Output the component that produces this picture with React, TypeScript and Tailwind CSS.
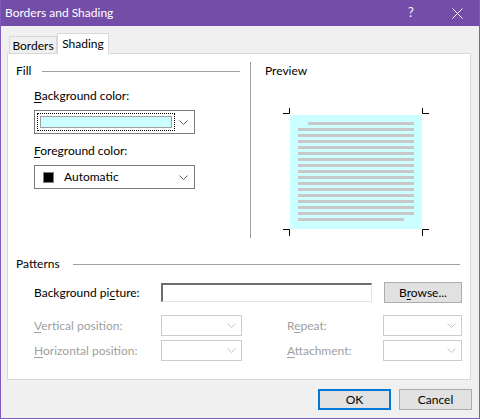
import React from 'react';

const font = { fontFamily: 'Lato, "Noto Sans", "Liberation Sans", sans-serif' };

function Chevron({ disabled }: { disabled?: boolean }) {
  return (
    <svg width="9" height="5" viewBox="0 0 9 5" className="shrink-0">
      <polyline
        points="0.5,0.5 4.5,4.5 8.5,0.5"
        fill="none"
        stroke={disabled ? '#c4c4c4' : '#606060'}
        strokeWidth="1"
      />
    </svg>
  );
}

function Accel({ children }: { children: React.ReactNode }) {
  return <span className="underline underline-offset-2 decoration-1">{children}</span>;
}

function DisabledSelect({ width }: { width: string }) {
  return (
    <div className={`${width} h-[21px] border border-[#cccccc] bg-white flex items-center justify-end pr-[5px]`}>
      <Chevron disabled />
    </div>
  );
}

function PreviewArt() {
  const lines = Array.from({ length: 17 }, (_, i) => i);
  return (
    <svg width="146" height="128" viewBox="0 0 146 128">
      <rect x="7" y="7" width="132" height="114" fill="#ccffff" />
      {lines.map((i) => (
        <rect
          key={i}
          x={i === 0 ? 25 : 15}
          y={14 + i * 6}
          width={i === 0 ? 106 : i === 16 ? 106 : 116}
          height="3"
          fill="#c8c8c8"
        />
      ))}
      <path d="M0 5.5 H6.5 V0" fill="none" stroke="#000" />
      <path d="M139.5 0 V5.5 H146" fill="none" stroke="#000" />
      <path d="M0 121.5 H6.5 V128" fill="none" stroke="#000" />
      <path d="M139.5 128 V121.5 H146" fill="none" stroke="#000" />
    </svg>
  );
}

export default function App() {
  return (
    <div
      className="w-[480px] h-[419px] bg-[#f0f0f0] border-x border-b border-[#7d5bbf] flex flex-col text-[12px] text-black overflow-hidden"
      style={font}
    >
      {/* Title bar */}
      <div className="h-[26px] shrink-0 bg-[#744da9] flex items-center text-white -mx-px">
        <span className="pl-[5px] text-[12px] flex-1">Borders and Shading</span>
        <span className="w-[46px] text-center text-[13px]">?</span>
        <span className="w-[46px] flex justify-center">
          <svg width="11" height="11" viewBox="0 0 11 11">
            <path d="M0.5 0.5 L10.5 10.5 M10.5 0.5 L0.5 10.5" stroke="#fff" strokeWidth="1" />
          </svg>
        </span>
      </div>

      <div className="flex-1 flex flex-col pl-[6px] pr-[8px] pt-[7px]">
        {/* Tabs */}
        <div className="h-[20px] flex items-end pl-[2px] relative z-10">
          <div className="w-[48px] h-[17px] border border-b-0 border-[#d9d9d9] bg-[#f0f0f0] flex items-center justify-center pt-[1px]">
            Borders
          </div>
          <div className="w-[52px] h-[21px] -mb-px border border-b-0 border-[#d9d9d9] bg-white flex items-center justify-center pb-[1px]">
            Shading
          </div>
        </div>

        {/* Panel */}
        <div className="h-[327px] border border-[#d9d9d9] bg-white flex flex-col">
          <div className="mt-[8px] h-[176px] flex">
            {/* Fill */}
            <div className="w-[242px] pl-[8px] flex flex-col">
              <div className="h-[18px] flex items-center">
                <span>Fill</span>
                <div className="flex-1 h-px bg-[#a0a0a0] ml-[11px] mr-[10px]" />
              </div>
              <div className="pl-[18px] flex flex-col">
                <div className="h-[16px] mt-[8px] flex items-center">
                  <span><Accel>B</Accel>ackground color:</span>
                </div>
                <div className="mt-[6px] w-[161px] h-[24px] border border-[#7a7a7a] flex items-center pl-[2px] pr-[6px]">
                  <div className="w-[138px] h-[18px] border border-dotted border-black p-[2px]">
                    <div className="w-full h-full bg-[#ccffff] border border-[#a0a0a0]" />
                  </div>
                  <div className="flex-1 flex justify-end">
                    <Chevron />
                  </div>
                </div>
                <div className="h-[16px] mt-[9px] flex items-center">
                  <span><Accel>F</Accel>oreground color:</span>
                </div>
                <div className="mt-[6px] w-[161px] h-[24px] border border-[#7a7a7a] flex items-center pl-[8px] pr-[6px]">
                  <div className="w-[11px] h-[11px] bg-black border border-[#808080]" />
                  <span className="ml-[10px] flex-1">Automatic</span>
                  <Chevron />
                </div>
              </div>
            </div>

            <div className="w-px bg-[#a0a0a0]" />

            {/* Preview */}
            <div className="flex-1 flex flex-col">
              <div className="h-[18px] flex items-center pl-[14px]">Preview</div>
              <div className="mt-[28px] ml-[32px]">
                <PreviewArt />
              </div>
            </div>
          </div>

          {/* Patterns */}
          <div className="mt-[17px] h-[18px] flex items-center pl-[8px] pr-[10px]">
            <span>Patterns</span>
            <div className="flex-1 h-px bg-[#a0a0a0] ml-[13px]" />
          </div>
          <div className="mt-[9px] h-[21px] flex items-center pl-[26px]">
            <span className="w-[127px]">Background pi<Accel>c</Accel>ture:</span>
            <div className="w-[211px] h-[19px] border-t-2 border-l-2 border-r border-b border-t-[#6d6d6d] border-l-[#6d6d6d] border-r-[#e3e3e3] border-b-[#e3e3e3] bg-white" />
            <button className="ml-[12px] w-[78px] h-[21px] bg-[#e1e1e1] border border-[#adadad] flex items-center justify-center">
              <span>B<Accel>r</Accel>owse...</span>
            </button>
          </div>
          <div className="mt-[12px] h-[21px] flex items-center pl-[26px] text-[#a0a0a0]">
            <span className="w-[127px]"><Accel>V</Accel>ertical position:</span>
            <DisabledSelect width="w-[81px]" />
            <span className="ml-[45px] w-[96px]">R<Accel>e</Accel>peat:</span>
            <DisabledSelect width="w-[79px]" />
          </div>
          <div className="mt-[4px] h-[21px] flex items-center pl-[26px] text-[#a0a0a0]">
            <span className="w-[127px]"><Accel>H</Accel>orizontal position:</span>
            <DisabledSelect width="w-[81px]" />
            <span className="ml-[45px] w-[96px]"><Accel>A</Accel>ttachment:</span>
            <DisabledSelect width="w-[79px]" />
          </div>
        </div>

        {/* Buttons */}
        <div className="mt-[9px] flex justify-end gap-[8px] -mr-px">
          <button className="w-[73px] h-[21px] bg-[#e1e1e1] border-2 border-[#0078d7] flex items-center justify-center">
            OK
          </button>
          <button className="w-[73px] h-[21px] bg-[#e1e1e1] border border-[#adadad] flex items-center justify-center">
            Cancel
          </button>
        </div>
      </div>
    </div>
  );
}
